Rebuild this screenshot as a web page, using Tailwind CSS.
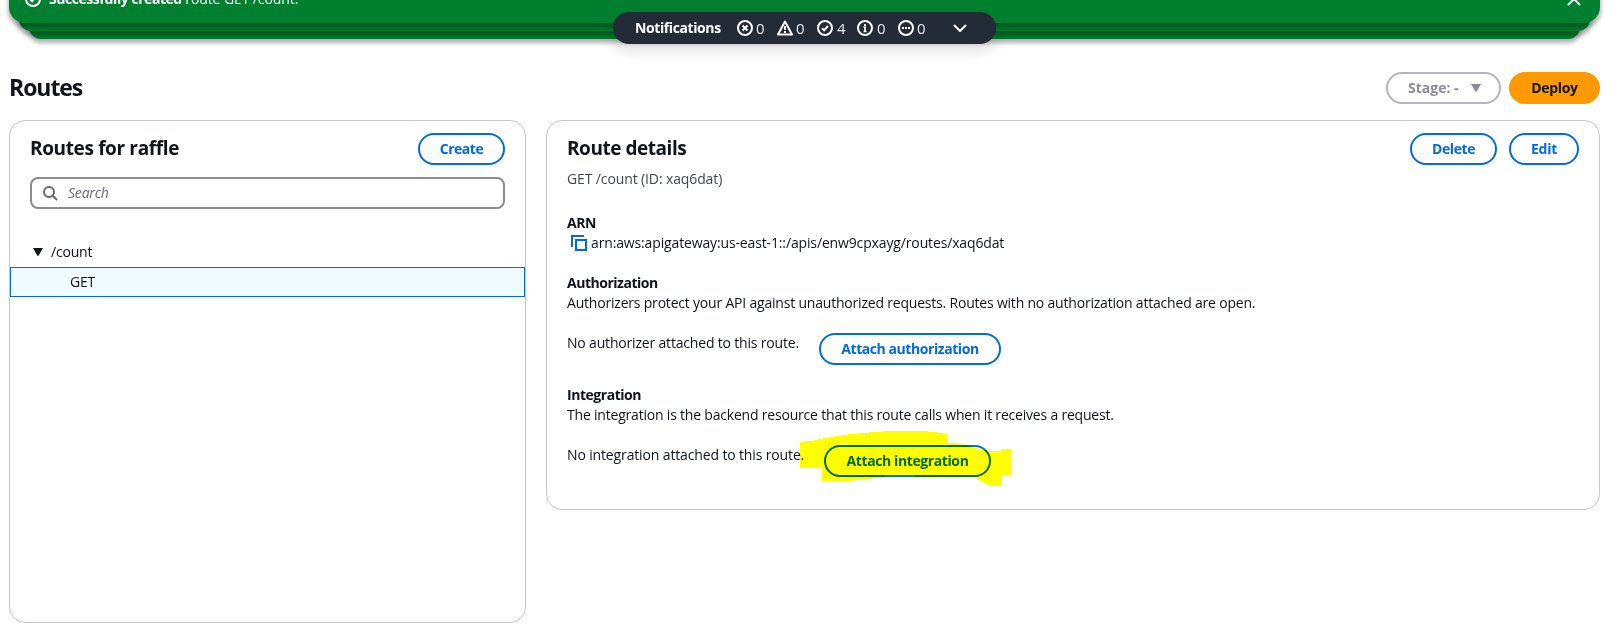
<!DOCTYPE html>
<html lang="en">
<head>
<meta charset="utf-8">
<title>Routes</title>
<script src="https://cdn.jsdelivr.net/npm/@tailwindcss/browser@4"></script>
</head>
<body class="relative h-[631px] overflow-hidden bg-white font-['Open_Sans',sans-serif] text-sm leading-5 tracking-[-0.2px] text-[#0f141a]">

  <!-- Stacked flash messages -->
  <div class="absolute left-[29px] top-0 h-[39px] w-[1551px] rounded-b-xl bg-[#00802f] shadow-[0_3px_4px_1px_rgba(0,0,0,0.3)]"></div>
  <div class="absolute left-[19px] top-0 h-[31px] w-[1571px] rounded-b-xl bg-[#00802f] shadow-[0_4px_4px_1px_rgba(0,0,0,0.3)]"></div>
  <div class="absolute left-[9px] -top-[25px] flex h-12 w-[1591px] items-center rounded-2xl bg-[#00802f] pl-4 pr-[18px] text-white shadow-[0_4px_4px_1px_rgba(0,0,0,0.3)]">
    <svg class="size-4" viewBox="0 0 16 16" fill="none" stroke="currentColor" stroke-width="2"><circle cx="8" cy="8" r="7"/><path d="M5 8.200l2.200 2L11 5.800"/></svg>
    <p class="ml-2 flex-1 whitespace-pre"><span class="font-bold tracking-[-0.45px]">Successfully created</span><span class="tracking-[-0.1px]"> route GET /count.</span></p>
    <svg class="size-4" viewBox="0 0 16 16" fill="none" stroke="#ebebf0" stroke-width="2" stroke-linecap="round"><path d="M2.500 2.500l11 11M13.500 2.500l-11 11"/></svg>
  </div>

  <!-- Notification bar -->
  <div class="absolute left-[613px] top-3 flex h-8 w-[383px] items-center rounded-full bg-[#232b37] pl-[22px] text-[#ebebf0] shadow-[0_6px_14px_1px_rgba(0,7,22,0.12)]">
    <span class="w-[102px] font-bold tracking-[-0.4px] text-white">Notifications</span>
    <div class="flex text-[15px] tracking-normal">
      <span class="flex w-10 items-center gap-[3px]"><svg class="size-4 text-white" viewBox="0 0 16 16" fill="none" stroke="currentColor" stroke-width="2"><circle cx="8" cy="8" r="7"/><path d="M5.500 5.500l5 5M10.500 5.500l-5 5"/></svg>0</span>
      <span class="flex w-10 items-center gap-[3px]"><svg class="size-4 text-white" viewBox="0 0 16 16" fill="none" stroke="currentColor" stroke-width="2" stroke-linejoin="round"><path d="M8 1.500l7 13H1z"/><path d="M8 6v4M8 11v2"/></svg>0</span>
      <span class="flex w-10 items-center gap-1"><svg class="size-4 text-white" viewBox="0 0 16 16" fill="none" stroke="currentColor" stroke-width="2"><circle cx="8" cy="8" r="7"/><path d="M5 8.200l2.200 2L11 5.800"/></svg>4</span>
      <span class="flex w-[41px] items-center gap-1"><svg class="size-4 text-white" viewBox="0 0 16 16" fill="none" stroke="currentColor" stroke-width="2"><circle cx="8" cy="8" r="7"/><path d="M8 12V7H6.500M6.500 11.500h3M8 4v2" stroke-width="1.700"/></svg>0</span>
      <span class="flex w-[54px] items-center gap-[3px]"><svg class="size-4 text-white" viewBox="0 0 16 16" fill="none" stroke="currentColor" stroke-width="2"><circle cx="8" cy="8" r="7"/><path d="M4 8h2M7 8h2M10 8h2"/></svg>0</span>
    </div>
    <svg class="size-4" viewBox="0 0 16 16" fill="none" stroke="#fff" stroke-width="2" stroke-linecap="round" stroke-linejoin="round"><path d="M2.500 5.500L8 11l5.500-5.500"/></svg>
  </div>

  <main class="pl-[9px] pr-[23px] pt-[72px]">
    <header class="flex h-8 items-start justify-between">
      <h1 class="text-[23px]/[31px] font-bold tracking-[-1.05px]">Routes</h1>
      <div class="flex gap-2">
        <button class="flex h-8 w-[115px] items-center rounded-full border-2 border-[#b4b4bb] pl-5 font-bold tracking-normal text-[#8c8c94]">Stage: -
          <svg class="ml-3 h-2 w-2.5" viewBox="0 0 10 8"><path d="M0 0h10L5.700 7.500a.8.8 0 0 1-1.400 0z" fill="#8c8c94"/></svg></button>
        <button class="h-8 w-[91px] rounded-full bg-[#ff9900] font-bold tracking-[-0.3px]">Deploy</button>
      </div>
    </header>

    <div class="mt-4 flex items-start gap-5">
      <section class="h-[503px] w-[517px] rounded-2xl border border-[#c6c6cd]">
        <div class="flex h-11 items-start justify-between px-5 pt-3">
          <h2 class="mt-[3px] text-[19px]/[25px] font-bold tracking-[-0.36px]">Routes for raffle</h2>
          <button class="h-8 w-[87px] rounded-full border-2 border-[#006ce0] font-bold tracking-[-0.5px] text-[#006ce0]">Create</button>
        </div>
        <div class="mx-5 mt-3 flex h-8 items-center rounded-lg border-2 border-[#8c8c94] pl-2.5 text-[#656871]">
          <svg class="size-4" viewBox="0 0 16 16" fill="none" stroke="currentColor" stroke-width="2"><circle cx="7" cy="7" r="5"/><path d="M10.500 10.500l4.500 4.500"/></svg>
          <span class="ml-2.5 italic">Search</span>
        </div>
        <div class="mt-[33px] flex h-5 items-center pl-[23px]">
          <svg class="h-2 w-2.5" viewBox="0 0 10 8"><path d="M0 0h10L5.700 7.500a.8.8 0 0 1-1.400 0z" fill="#0f141a"/></svg>
          <span class="ml-2">/count</span>
        </div>
        <div class="mt-[5px] flex h-[30px] items-center border border-[#006ce0] bg-[#f0fbff] pl-[59px]">GET</div>
      </section>

      <section class="h-[390px] w-[1054px] rounded-2xl border border-[#c6c6cd] px-5 pt-3">
        <div class="flex h-8 items-start justify-between">
          <h2 class="mt-[3px] text-[19px]/[25px] font-bold tracking-[-0.46px]">Route details</h2>
          <div class="flex gap-3">
            <button class="h-8 w-[87px] rounded-full border-2 border-[#006ce0] font-bold tracking-[-0.4px] text-[#006ce0]">Delete</button>
            <button class="h-8 w-[70px] rounded-full border-2 border-[#006ce0] font-bold text-[#006ce0]">Edit</button>
          </div>
        </div>
        <p class="mt-1 tracking-[-0.12px] text-[#424650]">GET /count (ID: xaq6dat)</p>

        <h3 class="mt-6 font-bold tracking-[-0.5px]">ARN</h3>
        <p class="flex items-center pl-1 tracking-[-0.14px]">
          <svg class="mr-1 size-4" viewBox="0 0 16 16" fill="none" stroke="#006ce0" stroke-width="2"><path d="M1 12V1h12"/><path d="M5 5h10v10H5z"/></svg>arn:aws:apigateway:us-east-1::/apis/enw9cpxayg/routes/xaq6dat</p>

        <h3 class="mt-5 font-bold tracking-[-0.48px]">Authorization</h3>
        <p>Authorizers protect your API against unauthorized requests. Routes with no authorization attached are open.</p>
        <div class="mt-5 flex items-start">
          <span class="w-[252px] tracking-[-0.18px]">No authorizer attached to this route.</span>
          <button class="h-8 w-[182px] rounded-full border-2 border-[#006ce0] font-bold tracking-[-0.43px] text-[#006ce0]">Attach authorization</button>
        </div>

        <h3 class="mt-5 font-bold tracking-[-0.46px]">Integration</h3>
        <p>The integration is the backend resource that this route calls when it receives a request.</p>
        <div class="relative mt-5 flex items-start">
          <span class="w-[257px] tracking-[-0.14px]">No integration attached to this route.</span>
          <button class="h-8 w-[167px] rounded-full border-2 border-[#006ce0] font-bold tracking-[-0.4px] text-[#006ce0]">Attach integration</button>
          <!-- Highlighter stroke over the button -->
          <svg class="absolute -top-[15px] left-[233px] h-[57px] w-[212px] mix-blend-multiply" viewBox="780 390 636 171" shape-rendering="crispEdges"><path fill="#ffff00" d="M780 426L820 422 850 415 885 409 925 403 980 398 1055 393H1150L1190 397 1221 402V430H1254L1290 439 1315 446 1350 453H1386V447H1413V524L1386 527V557H1350L1340 550 1320 543 1305 531H1125V526H1035V531L960 539 930 543H846V503H780z"/></svg>
        </div>
      </section>
    </div>
  </main>
</body>
</html>
